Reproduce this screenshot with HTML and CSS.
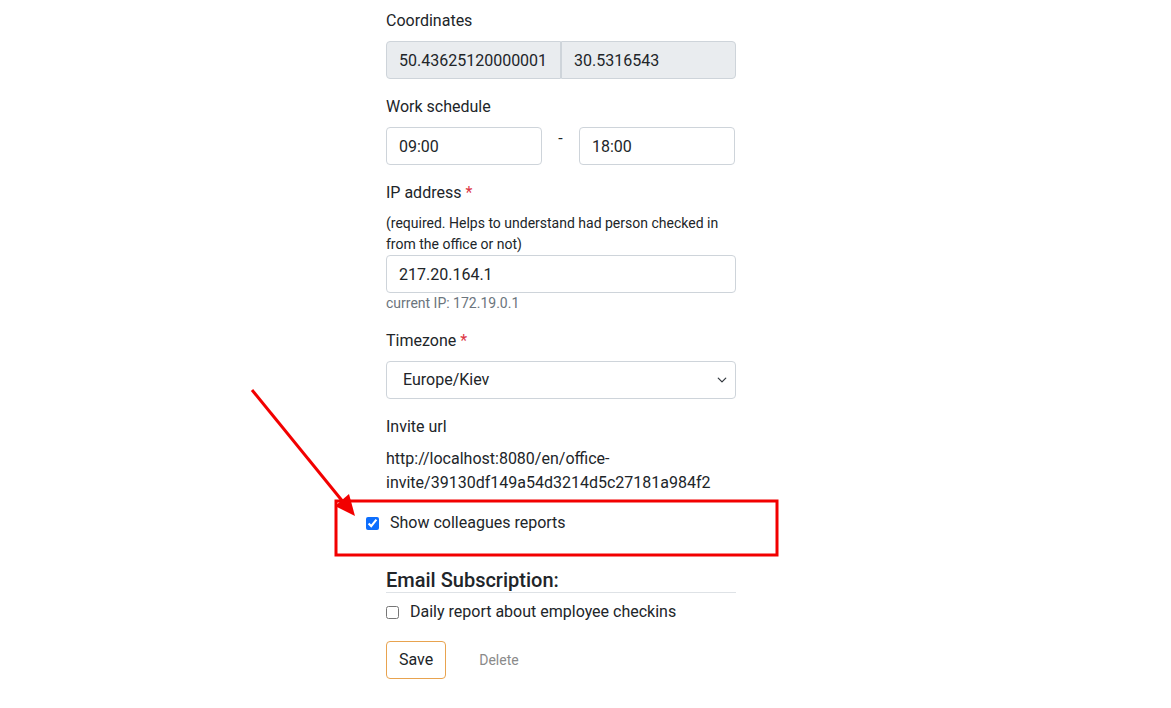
FILE: index.html
```html
<!DOCTYPE html>
<html lang="en">
<head>
    <meta charset="UTF-8">
    <meta name="viewport" content="width=device-width, initial-scale=1.0">
    <title>Office settings</title>
    <link rel="stylesheet" href="styles.css">
</head>
<body>

<div class="page">
    <!-- Coordinates -->
    <div class="field">
        <label class="label">Coordinates</label>
        <div class="input-group">
            <input class="input input-left" type="text" value="50.43625120000001" disabled>
            <input class="input input-right" type="text" value="30.5316543" disabled>
        </div>
    </div>

    <!-- Work schedule -->
    <div class="field">
        <label class="label">Work schedule</label>
        <div class="schedule">
            <input class="input time" type="text" value="09:00">
            <span class="sep">-</span>
            <input class="input time" type="text" value="18:00">
        </div>
    </div>

    <!-- IP address -->
    <div class="field">
        <label class="label">IP address <span class="req">*</span></label>
        <p class="help">(required. Helps to understand had person checked in from the office or not)</p>
        <input class="input" type="text" value="217.20.164.1">
        <div class="form-text">current IP: 172.19.0.1</div>
    </div>

    <!-- Timezone -->
    <div class="field">
        <label class="label">Timezone <span class="req">*</span></label>
        <select class="input select">
            <option>Europe/Kiev</option>
        </select>
    </div>

    <!-- Invite url -->
    <div class="field">
        <label class="label">Invite url</label>
        <div class="url">http://localhost:8080/en/office-invite/39130df149a54d3214d5c27181a984f2</div>
    </div>

    <div class="check check-shift">
        <input type="checkbox" id="show-reports" checked>
        <label for="show-reports">Show colleagues reports</label>
    </div>

    <h4 class="subtitle">Email Subscription:</h4>
    <div class="check">
        <input type="checkbox" id="daily-report">
        <label for="daily-report">Daily report about employee checkins</label>
    </div>

    <div class="actions">
        <button class="btn-save">Save</button>
        <a class="btn-delete" href="#">Delete</a>
    </div>
</div>

<!-- anotação sobre a página -->
<svg class="annot" width="1171" height="708" viewBox="0 0 1171 708">
    <line x1="252" y1="390" x2="344" y2="503" stroke="#f20000" stroke-width="3"/>
    <polygon points="355,516 335,506 349,494" fill="#f20000"/>
    <rect x="336" y="501" width="441" height="54" fill="none" stroke="#f20000" stroke-width="3"/>
</svg>

</body>
</html>
```

FILE: styles.css
```css
body {
    margin: 0;
    font-family: Roboto, "Liberation Sans", sans-serif;
    font-size: 16px;
    line-height: 1.5;
    color: #212529;
    background-color: #fff;
    position: relative;
    min-height: 708px;
}
.page {
    width: 350px;
    margin-left: 386px;
    padding-top: 9px;
}
.field {
    margin-bottom: 16px;
}
.label {
    display: block;
    margin-bottom: 8px;
}
.req {
    color: #dc3545;
}
.input {
    display: block;
    box-sizing: border-box;
    width: 100%;
    height: 38px;
    padding: 6px 12px;
    font: inherit;
    color: #212529;
    background-color: #fff;
    border: 1px solid #ced4da;
    border-radius: 4px;
    margin: 0;
}
.input:disabled {
    background-color: #e9ecef;
    opacity: 1;
}
.input-group {
    display: flex;
}
.input-group .input {
    width: 175px;
}
.input-left {
    border-radius: 4px 0 0 4px;
}
.input-right {
    border-radius: 0 4px 4px 0;
}
.schedule {
    display: flex;
    align-items: flex-start;
}
.schedule .time {
    width: 156px;
}
.sep {
    width: 37px;
    text-align: center;
    line-height: 24px;
}
.help {
    margin: 0;
    font-size: 14px;
    line-height: 21px;
}
.form-text {
    font-size: 14px;
    line-height: 20px;
    color: #6c757d;
}
.select {
    appearance: none;
    padding-left: 16px;
    background-image: url("data:image/svg+xml,%3csvg xmlns='http://www.w3.org/2000/svg' viewBox='0 0 16 16'%3e%3cpath fill='none' stroke='%23343a40' stroke-linecap='round' stroke-linejoin='round' stroke-width='2' d='M2 5l6 6 6-6'/%3e%3c/svg%3e");
    background-repeat: no-repeat;
    background-position: right 8px center;
    background-size: 10px 10px;
}
.url {
    line-height: 24px;
}
.check {
    display: flex;
    align-items: center;
    line-height: 24px;
}
.check input {
    width: 13px;
    height: 13px;
    margin: 0 11px 0 0;
    accent-color: #0d6efd;
}
.check-shift {
    margin-left: -20px;
    margin-bottom: 33px;
}
.subtitle {
    margin: 0 0 7px;
    font-size: 20px;
    font-weight: 500;
    line-height: 24px;
    border-bottom: 1px solid #dee2e6;
}
.actions {
    display: flex;
    align-items: center;
    margin-top: 17px;
}
.btn-save {
    box-sizing: border-box;
    height: 38px;
    padding: 6px 12px;
    font: inherit;
    color: #212529;
    background-color: #fff;
    border: 1px solid #e8a34f;
    border-radius: 4px;
}
.btn-delete {
    margin-left: 33px;
    font-size: 14px;
    color: #8a8a8a;
    text-decoration: none;
}
.annot {
    position: absolute;
    left: 0;
    top: 0;
    pointer-events: none;
}
```
